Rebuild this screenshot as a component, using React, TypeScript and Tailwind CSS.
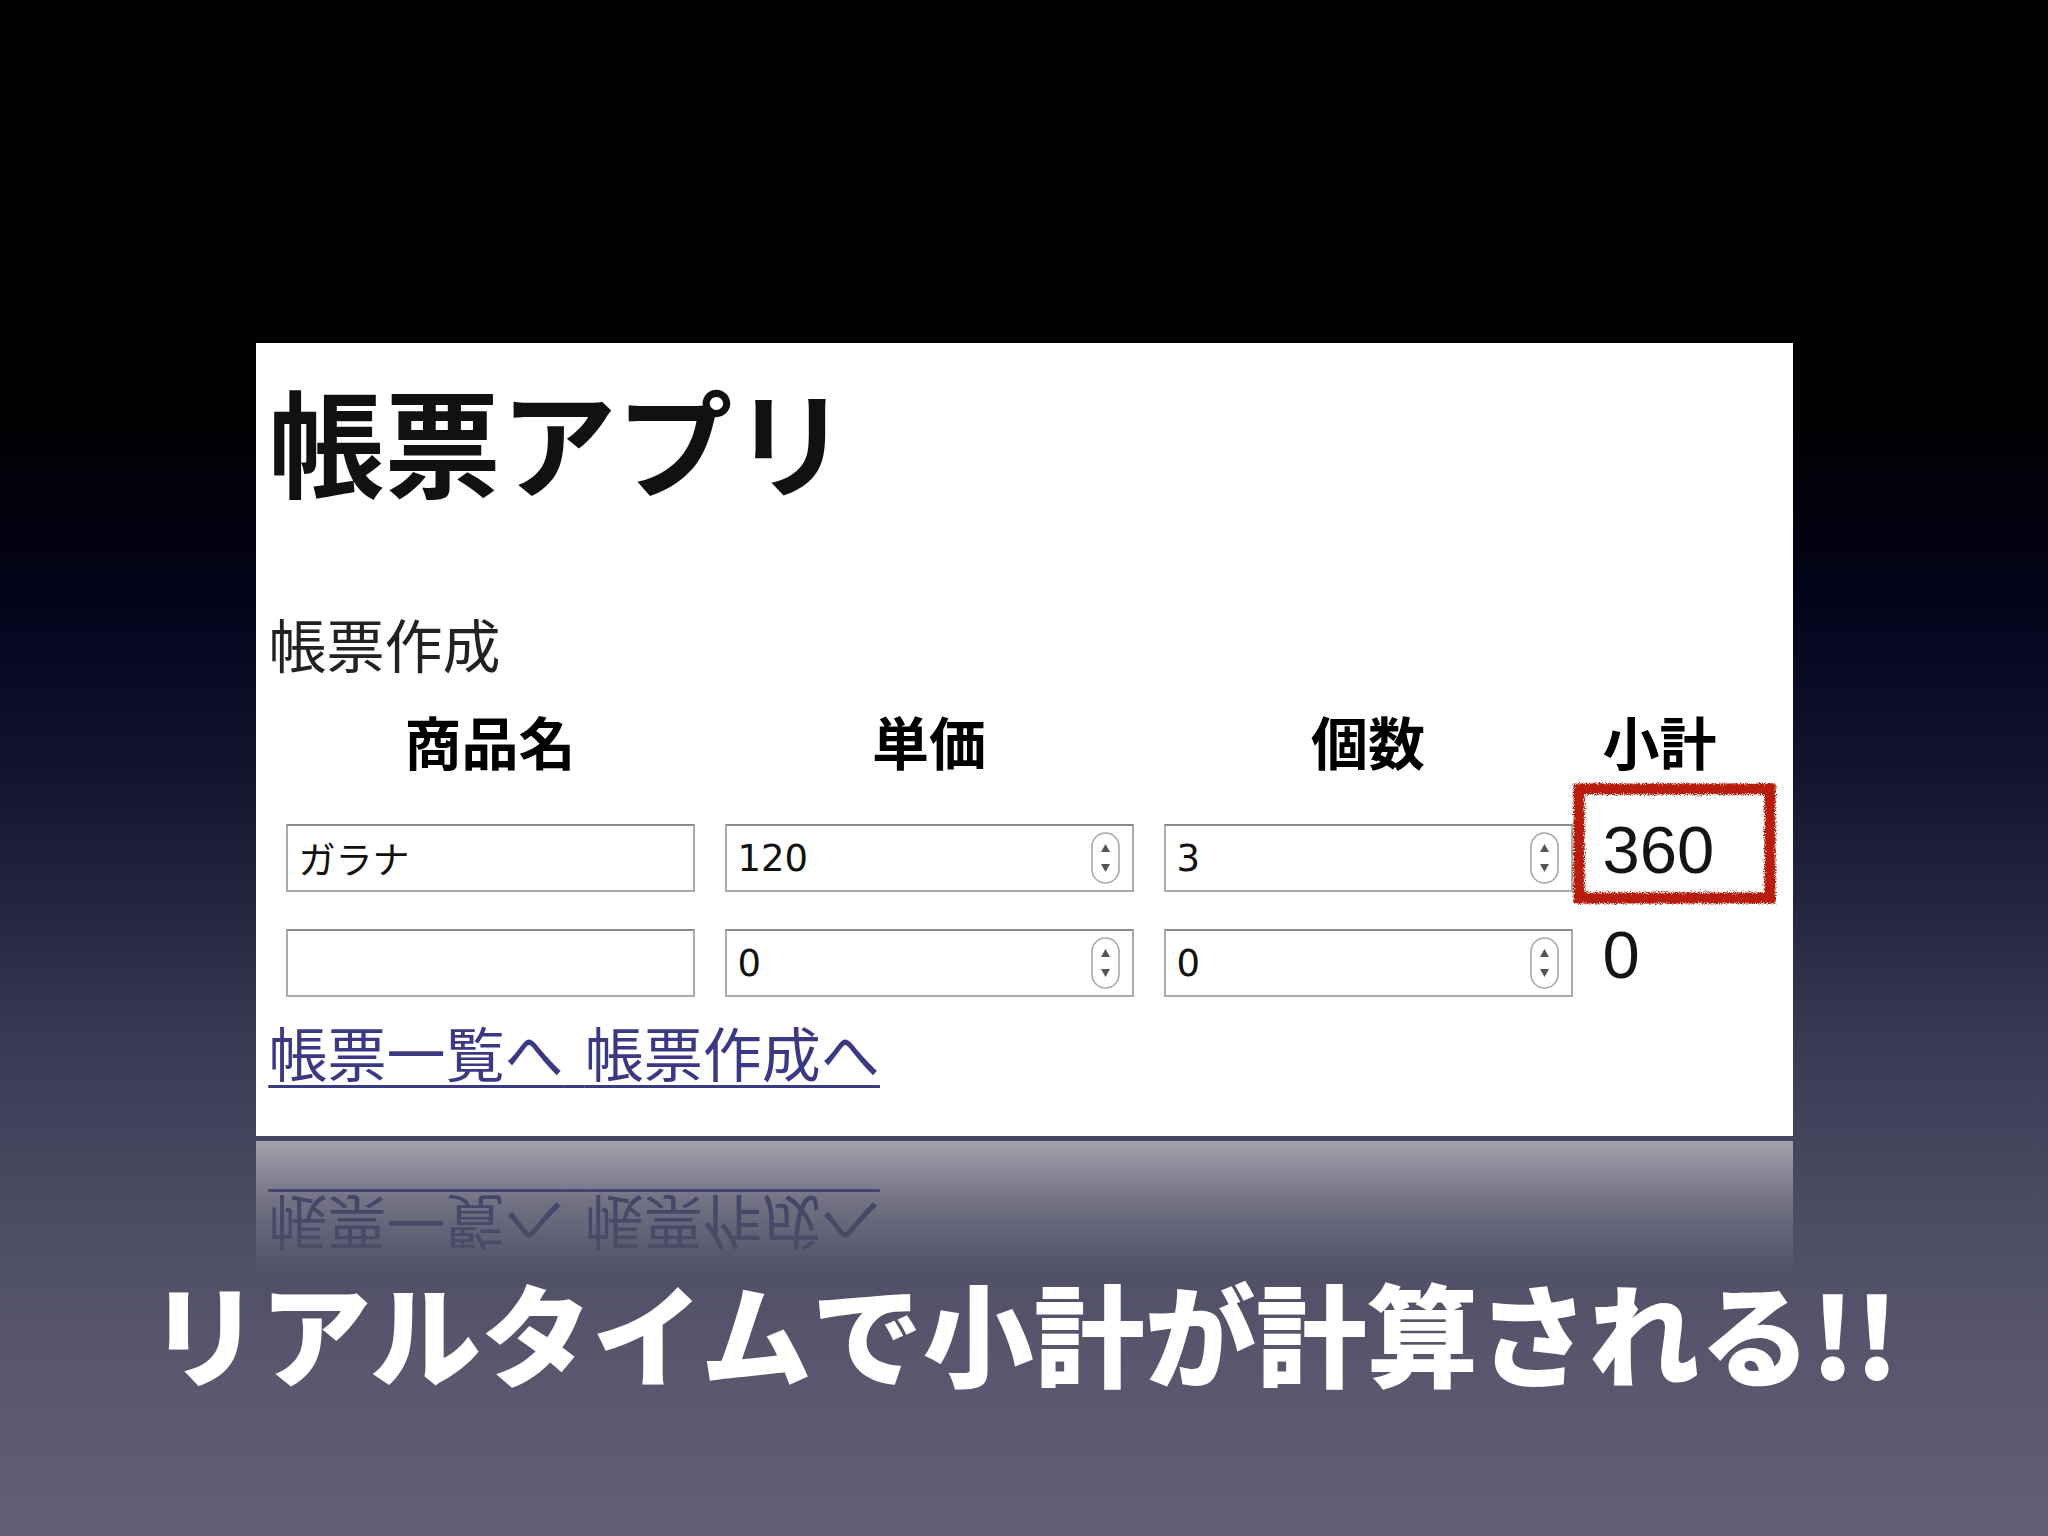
import React from 'react';

const jp = "font-['Noto_Sans_CJK_JP',sans-serif]";

/** Rough hand-drawn red marker box around the computed subtotal */
function MarkerBox() {
  return (
    <svg
      className="absolute left-[-31px] top-[-42px]"
      width="205"
      height="123"
      viewBox="0 0 205 123"
    >
      <defs>
        <filter id="rough" x="-10%" y="-10%" width="120%" height="120%">
          <feTurbulence type="fractalNoise" baseFrequency="0.95" numOctaves="2" seed="3" />
          <feDisplacementMap in="SourceGraphic" scale="7" />
        </filter>
      </defs>
      <rect
        x="7"
        y="7"
        width="191"
        height="109"
        fill="none"
        stroke="#b71c0c"
        strokeWidth="11"
        filter="url(#rough)"
      />
    </svg>
  );
}

function Spinner() {
  return (
    <svg className="absolute right-[14px] top-[8px]" width="29" height="52" viewBox="0 0 29 52">
      <rect x="1" y="1" width="27" height="50" rx="13.5" fill="#fff" stroke="#a8a8a8" strokeWidth="1.6" />
      <path d="M14.5 12 L19 20 H10 Z" fill="#555" />
      <path d="M14.5 40 L19 32 H10 Z" fill="#555" />
    </svg>
  );
}

function Field({ value, number }: { value: string; number?: boolean }) {
  return (
    <div className="relative h-[68px]">
      <input
        type="text"
        readOnly
        value={value}
        className="w-full h-full border-2 border-[#ababab] border-t-[#8a8a8a] bg-white px-[11px] text-[37px] text-[#111] outline-none font-['DejaVu_Sans','Noto_Sans_CJK_JP',sans-serif]"
      />
      {number && <Spinner />}
    </div>
  );
}

function Subtotal({ value, marked }: { value: string; marked?: boolean }) {
  return (
    <div className="relative h-[68px] pb-[18px] flex items-center">
      <span className="text-[67px] leading-none text-[#141414] font-['Liberation_Sans',sans-serif]">
        {value}
      </span>
      {marked && <MarkerBox />}
    </div>
  );
}

function Links() {
  return (
    <p className={`text-[59px] leading-none [word-spacing:8px] ${jp}`}>
      <span className="text-[#3b3884] underline decoration-[3px] underline-offset-[8px]">
        <a href="#">帳票一覧へ</a> <a href="#">帳票作成へ</a>
      </span>
    </p>
  );
}

/** The captured web page: invoice form */
function Sheet() {
  return (
    <div className={`w-[1537px] h-[793px] bg-white pt-[37px] pl-[13px] flex flex-col ${jp}`}>
      <h1 className="text-[116px] leading-none font-bold text-[#111]">帳票アプリ</h1>
      <h2 className="mt-[118px] text-[58px] leading-none font-normal text-[#222]">帳票作成</h2>

      <div className="mt-[40px] ml-[17px] grid grid-cols-[409px_409px_409px_max-content] gap-x-[30px] gap-y-[37px] items-start">
        {['商品名', '単価', '個数', '小計'].map((h) => (
          <div key={h} className="pb-[18px] text-center text-[57px] leading-none font-bold text-black">
            {h}
          </div>
        ))}

        <Field value="ガラナ" />
        <Field value="120" number />
        <Field value="3" number />
        <Subtotal value="360" marked />

        <Field value="" />
        <Field value="0" number />
        <Field value="0" number />
        <Subtotal value="0" />
      </div>

      <div className="mt-[25px]">
        <Links />
      </div>
    </div>
  );
}

export default function App() {
  return (
    <div className="min-h-[1536px] w-full flex flex-col items-center pt-[343px] bg-[linear-gradient(to_bottom,#000_0%,#000_26%,#03031a_39%,#13132f_50%,#25253f_59%,#3a3a53_68%,#4a4a61_78%,#57566c_88%,#625f76_100%)]">
      <Sheet />

      {/* Keynote-style reflection of the page's bottom edge */}
      <div
        aria-hidden
        className="mt-[5px] w-[1537px] h-[134px] bg-white [mask-image:linear-gradient(to_bottom,rgba(0,0,0,0.5),rgba(0,0,0,0.22)_45%,rgba(0,0,0,0))]"
      >
        <div className="h-[134px] [transform:scaleY(-1)] flex flex-col justify-end pb-[55px] pl-[13px]">
          <Links />
        </div>
      </div>

      <p className={`w-full text-center text-[111px] leading-none font-black text-white ${jp}`}>
        リアルタイムで小計が計算される!!
      </p>
    </div>
  );
}
